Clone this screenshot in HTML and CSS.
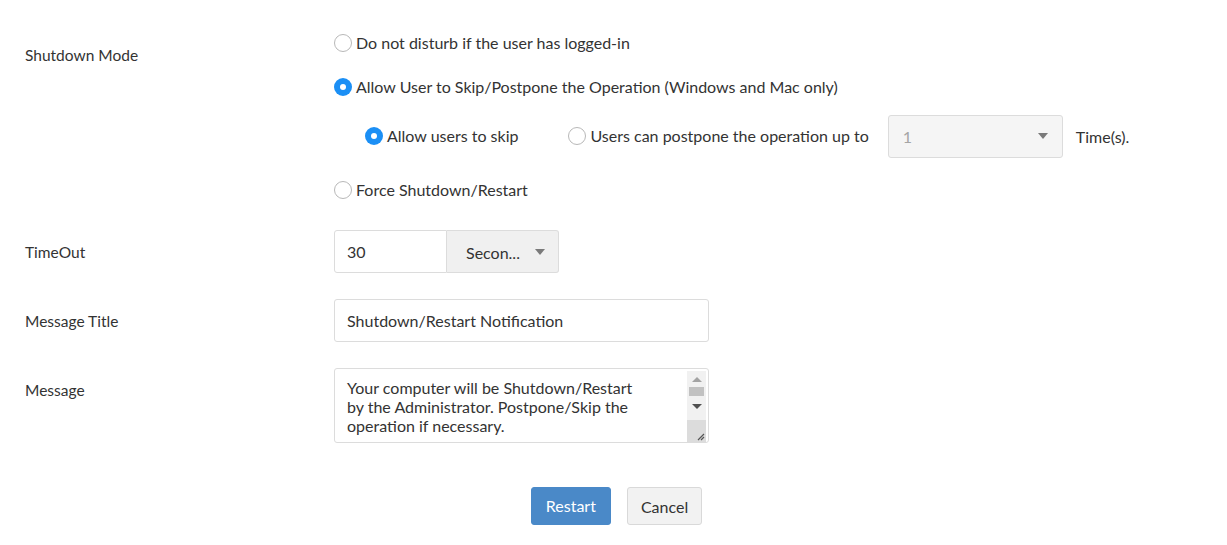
FILE: index.html
```html
<!DOCTYPE html>
<html>
<head>
    <meta charset="utf-8">
    <title>Shutdown/Restart</title>
    <link rel="stylesheet" href="styles.css">
</head>
<body>
    <form class="settings">
        <div class="row row-mode">
            <div class="label">Shutdown Mode</div>
            <div class="options">
                <label class="radio"><span class="dot"></span>Do not disturb if the user has logged-in</label>
                <label class="radio checked gap-2"><span class="dot"></span>Allow User to Skip/Postpone the Operation (Windows and Mac only)</label>
                <div class="sub-options">
                    <label class="radio checked"><span class="dot"></span>Allow users to skip</label>
                    <label class="radio postpone"><span class="dot"></span>Users can postpone the operation up to</label>
                    <div class="select select-times">
                        <span>1</span>
                        <span class="caret"></span>
                    </div>
                    <span class="suffix">Time(s).</span>
                </div>
                <label class="radio gap-4"><span class="dot"></span>Force Shutdown/Restart</label>
            </div>
        </div>

        <div class="row row-timeout">
            <div class="label">TimeOut</div>
            <div class="timeout">
                <div class="input input-num">30</div>
                <div class="select select-unit">
                    <span>Secon...</span>
                    <span class="caret"></span>
                </div>
            </div>
        </div>

        <div class="row row-title">
            <div class="label">Message Title</div>
            <div class="input input-wide">Shutdown/Restart Notification</div>
        </div>

        <div class="row row-message">
            <div class="label">Message</div>
            <div class="textarea">
                <div class="textarea-text">Your computer will be Shutdown/Restart
by the Administrator. Postpone/Skip the
operation if necessary.</div>
                <div class="scrollbar">
                    <span class="arrow-up"></span>
                    <span class="thumb"></span>
                    <span class="arrow-down"></span>
                    <span class="grip">
                        <svg width="10" height="10" viewBox="0 0 10 10">
                            <path d="M9 3 L3 9 M9 6 L6 9" stroke="#555" stroke-width="1.2" fill="none"/>
                        </svg>
                    </span>
                </div>
            </div>
        </div>

        <div class="actions">
            <button type="button" class="btn btn-primary">Restart</button>
            <button type="button" class="btn">Cancel</button>
        </div>
    </form>
</body>
</html>
```

FILE: styles.css
```css
* {
    margin: 0;
    padding: 0;
    box-sizing: border-box;
}

body {
    background: #fff;
    font-family: Lato, "Open Sans", sans-serif;
    font-size: 16px;
    color: #333;
}

.settings {
    padding: 33px 25px 0;
}

.row {
    display: flex;
    align-items: flex-start;
}

.label {
    width: 309px;
    flex-shrink: 0;
    line-height: 42px;
    height: 43px;
    padding-top: 1px;
    font-size: 15.5px;
}

.row-mode .label {
    padding-top: 0;
    margin-top: 1px;
}

.row-timeout {
    margin-top: 30px;
}

.row-title,
.row-message {
    margin-top: 26px;
}

/* radios */
.options {
    display: flex;
    flex-direction: column;
    align-items: flex-start;
}

.radio {
    display: flex;
    align-items: center;
    height: 20px;
    line-height: 20px;
    cursor: pointer;
    white-space: nowrap;
}

.radio .dot {
    width: 18px;
    height: 18px;
    border-radius: 50%;
    border: 1px solid #b8b8b8;
    background: #fff;
    margin-right: 4px;
    position: relative;
    flex-shrink: 0;
}

.radio.checked .dot {
    border: none;
    background: #1b8ff5;
}

.radio.checked .dot::after {
    content: "";
    position: absolute;
    left: 6px;
    top: 6px;
    width: 6px;
    height: 6px;
    border-radius: 50%;
    background: #fff;
}

.gap-2 {
    margin-top: 24px;
}

.gap-4 {
    margin-top: 23px;
}

.sub-options {
    display: flex;
    align-items: center;
    margin-top: 18px;
    margin-left: 31px;
    height: 42px;
}

.radio.postpone {
    margin-left: 50px;
}

.suffix {
    margin-left: 13px;
}

/* inputs */
.input,
.select {
    height: 43px;
    border: 1px solid #dcdcdc;
    display: flex;
    align-items: center;
}

.input {
    background: #fff;
    padding-left: 12px;
    border-radius: 3px;
}

.select {
    background: #f5f5f5;
    border-radius: 3px;
    justify-content: space-between;
}

.caret {
    width: 0;
    height: 0;
    border-left: 5px solid transparent;
    border-right: 5px solid transparent;
    border-top: 6px solid #7a7a7a;
}

.select-times {
    width: 175px;
    height: 43px;
    margin-left: 19px;
    padding: 0 14px 0 14px;
    color: #a5a5a5;
}

.timeout {
    display: flex;
}

.input-num {
    width: 113px;
    border-radius: 3px 0 0 3px;
}

.select-unit {
    width: 112px;
    border-left: none;
    background: #f0f0f0;
    border-radius: 0 3px 3px 0;
    padding: 0 13px 0 19px;
    color: #333;
}

.select-unit span:first-child {
    padding-top: 2px;
}

.input-wide {
    width: 375px;
}

/* message box */
.textarea {
    width: 375px;
    height: 75px;
    border: 1px solid #dcdcdc;
    border-radius: 3px;
    display: flex;
    overflow: hidden;
}

.textarea-text {
    flex: 1;
    white-space: pre;
    line-height: 19px;
    padding: 9px 0 0 12px;
}

.scrollbar {
    width: 19px;
    background: #f1f1f1;
    display: flex;
    flex-direction: column;
    align-items: center;
    margin: 2px 2px 0 0;
}

.arrow-up {
    margin-top: 6px;
    width: 0;
    height: 0;
    border-left: 5px solid transparent;
    border-right: 5px solid transparent;
    border-bottom: 5px solid #a3a3a3;
}

.thumb {
    margin-top: 5px;
    width: 15px;
    height: 9px;
    background: #c1c1c1;
}

.arrow-down {
    margin-top: 8px;
    width: 0;
    height: 0;
    border-left: 5px solid transparent;
    border-right: 5px solid transparent;
    border-top: 5px solid #505050;
}

.grip {
    margin-top: auto;
    width: 100%;
    height: 22px;
    background: #dcdcdc;
    display: flex;
    align-items: flex-end;
    justify-content: flex-end;
    padding: 0 1px 1px 0;
}

/* buttons */
.actions {
    display: flex;
    justify-content: center;
    gap: 16px;
    margin-top: 44px;
    padding-left: 6px;
}

.btn {
    height: 38px;
    padding: 0 13px;
    font-family: Lato, "Open Sans", sans-serif;
    font-size: 16px;
    color: #333;
    background: #f2f2f2;
    border: 1px solid #d9d9d9;
    border-radius: 3px;
    cursor: pointer;
}

.btn-primary {
    background: #4a89c8;
    border-color: #4a89c8;
    color: #fff;
    padding: 0 14px 1px;
}
```
